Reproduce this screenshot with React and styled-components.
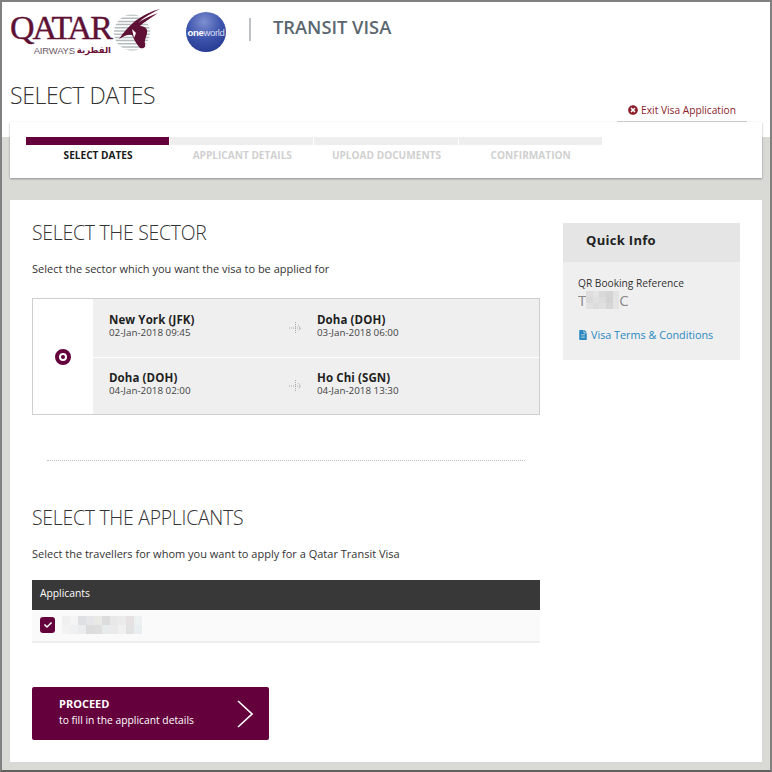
import React from 'react';
import styled, { createGlobalStyle } from 'styled-components';
import { FaTimesCircle, FaFileAlt, FaCheck } from 'react-icons/fa';

const maroon = '#64003c';

const GlobalStyle = createGlobalStyle`
  html, body {
    margin: 0;
    padding: 0;
  }
  body {
    font-family: "Open Sans", "Liberation Sans", sans-serif;
    color: #333;
  }
  * {
    box-sizing: border-box;
  }
`;

const Page = styled.div`
  width: 772px;
  height: 772px;
  overflow: hidden;
  padding: 0 8px 0 8px;
  border-top: 2px solid #808080;
  border-left: 2px solid #808080;
  border-right: 2px solid #808080;
  border-bottom: 2px solid #606060;
  background: linear-gradient(#fff 135px, #d9dad6 135px);
`;

const Header = styled.header`
  height: 71px;
  display: flex;
  align-items: flex-start;
`;

const Logo = styled.div`
  width: 153px;
  height: 50px;
  display: flex;
  align-items: flex-start;
  margin-top: 6px;
`;

const LogoText = styled.div`
  width: 101px;
  display: flex;
  flex-direction: column;
  align-items: flex-end;
  flex-shrink: 0;
`;

const LogoName = styled.div`
  font-family: "Liberation Serif", serif;
  font-size: 34px;
  line-height: 34px;
  margin-top: 3px;
  letter-spacing: -1.9px;
  -webkit-text-stroke: 0.4px #5e1134;
  color: #5e1134;
`;

const LogoSub = styled.div`
  display: flex;
  align-items: center;
  gap: 2px;
  margin-top: -1px;
  height: 12px;
`;

const LogoAirways = styled.span`
  font-family: "Liberation Sans", sans-serif;
  font-size: 9.5px;
  letter-spacing: -0.2px;
  color: #6d5a66;
`;

const LogoArabic = styled.span`
  font-family: "DejaVu Sans", sans-serif;
  font-size: 8.5px;
  font-weight: bold;
  color: #6d1238;
`;

const Oneworld = styled.div`
  width: 40px;
  height: 40px;
  border-radius: 50%;
  margin: 10px 0 0 23px;
  flex-shrink: 0;
  display: flex;
  align-items: center;
  justify-content: center;
  background: radial-gradient(circle at 45% 25%, #7e8fd0 0%, #3e55ad 45%, #1c2f86 100%);
  font-family: "Liberation Sans", sans-serif;
  font-size: 9.5px;
  color: #d7dcf0;
  letter-spacing: -0.3px;

  b {
    color: #fff;
  }
`;

const HeaderRule = styled.div`
  width: 2px;
  height: 23px;
  background: #bcc2c6;
  margin: 16px 22px 0 23px;
`;

const VisaTitle = styled.div`
  font-size: 18.3px;
  font-weight: 600;
  line-height: 24px;
  margin-top: 13px;
  color: #5b6770;
`;

const TitleRow = styled.div`
  height: 49px;
  display: flex;
  justify-content: space-between;
  align-items: flex-end;
`;

const PageTitle = styled.h1`
  margin: 0 0 12px;
  font-size: 23px;
  line-height: 30px;
  font-weight: 300;
  letter-spacing: -0.35px;
  color: #333;
`;

const ExitLink = styled.a`
  width: 130px;
  height: 24px;
  margin-right: 15px;
  display: flex;
  align-items: center;
  justify-content: center;
  gap: 3px;
  font-size: 10.2px;
  color: #8c1d2b;
  background: #fff;
  border-bottom: 1px solid #c9c9c9;
`;

const StepsCard = styled.div`
  height: 56px;
  padding: 15px 16px 0;
  background: #fff;
  display: grid;
  grid-template-columns: repeat(4, 144.2px);
  box-shadow: 0 1px 2px rgba(0, 0, 0, 0.35);
`;

const Step = styled.div`
  font-size: 10.1px;
  font-weight: 700;
  text-align: center;
  color: ${(p) => (p.$active ? '#1a1a1a' : '#d0d0d0')};

  &::before {
    content: '';
    display: block;
    height: 8px;
    margin-right: 1px;
    margin-bottom: 3px;
    background: ${(p) => (p.$active ? maroon : '#eeeeee')};
  }
`;

const MainCard = styled.main`
  margin-top: 22px;
  height: 562px;
  padding: 21px 22px 0;
  background: #fff;
  display: grid;
  grid-template-columns: 508px 177px;
  column-gap: 23px;
  align-items: start;
`;

const Heading = styled.h2`
  margin: 1px 0 0;
  font-size: 19.4px;
  line-height: 22px;
  font-weight: 300;
  letter-spacing: -0.25px;
  color: #333;
`;

const Lead = styled.p`
  margin: 16px 0 0;
  font-size: 11px;
  line-height: 18px;
  color: #333;
`;

const SectorBox = styled.div`
  margin-top: 20px;
  height: 117px;
  border: 1px solid #cfcfcf;
  display: flex;
`;

const RadioCell = styled.div`
  width: 60px;
  display: flex;
  align-items: center;
  justify-content: center;
  flex-shrink: 0;
`;

const Radio = styled.span`
  width: 16px;
  height: 16px;
  border-radius: 50%;
  border: 4px solid ${maroon};
  background: #fff;
  display: flex;
  align-items: center;
  justify-content: center;

  &::after {
    content: '';
    width: 4px;
    height: 4px;
    border-radius: 50%;
    background: ${maroon};
  }
`;

const Legs = styled.div`
  flex: 1;
  display: grid;
  grid-template-rows: 1fr 1fr;
  background: #efefef;
`;

const Leg = styled.div`
  display: grid;
  grid-template-columns: 179px 29px 1fr;
  align-items: center;
  padding-left: 16px;

  & + & {
    border-top: 1px solid #fff;
  }
`;

const Place = styled.div`
  padding-bottom: 4px;
`;

const PlaceName = styled.div`
  font-size: 11.5px;
  line-height: 15px;
  font-weight: 700;
  letter-spacing: 0.1px;
  color: #1f1f1f;
`;

const PlaceDate = styled.div`
  font-size: 9.8px;
  line-height: 12px;
  color: #444;
`;

const LegArrow = styled.svg`
  width: 14px;
  height: 14px;
  color: #a9a9a9;
`;

const Separator = styled.div`
  margin: 45px 15px 0;
  border-top: 1px dotted #bdbdbd;
`;

const ApplicantsHeading = styled(Heading)`
  margin-top: 46px;
`;

const Table = styled.div`
  margin-top: 17px;
`;

const TableHead = styled.div`
  height: 30px;
  display: flex;
  align-items: center;
  padding: 0 0 4px 8px;
  font-size: 10.3px;
  color: #fff;
  background: #383838;
`;

const TableRow = styled.div`
  height: 33px;
  display: flex;
  align-items: center;
  gap: 7px;
  padding: 0 8px 2px;
  background: #fafafa;
  border-bottom: 2px solid #eeeeee;
`;

const Checkbox = styled.span`
  width: 15px;
  height: 16px;
  border-radius: 3px;
  background: ${maroon};
  color: #fff;
  display: flex;
  align-items: center;
  justify-content: center;
  font-size: 8px;
`;

const Mosaic = styled.div`
  display: grid;
  grid-template-columns: repeat(${(p) => p.$cols}, ${(p) => p.$size}px);
  grid-auto-rows: ${(p) => p.$rowHeight}px;
`;

const Pixel = styled.span`
  background: ${(p) => p.$color};
`;

const ProceedButton = styled.a`
  margin-top: 44px;
  width: 237px;
  height: 53px;
  padding: 0 16px 4px 27px;
  border-radius: 2px;
  display: flex;
  align-items: center;
  justify-content: space-between;
  color: #fff;
  background: ${maroon};
`;

const ProceedText = styled.div`
  font-size: 10.3px;
  line-height: 16px;

  strong {
    display: block;
    font-size: 11px;
    font-weight: 700;
  }
`;

const ProceedChevron = styled.svg`
  margin-top: 4px;
`;

const QuickInfo = styled.aside`
  background: #efefef;
  margin-top: 2px;
`;

const QuickHead = styled.div`
  height: 39px;
  padding: 0 0 6px 23px;
  display: flex;
  align-items: center;
  font-size: 13px;
  font-weight: 700;
  letter-spacing: 0.3px;
  color: #222;
  background: #e5e5e5;
`;

const QuickBody = styled.div`
  height: 98px;
  padding: 14px 15px 0;
`;

const QuickLabel = styled.div`
  font-size: 10.2px;
  line-height: 15px;
  color: #333;
`;

const QuickValue = styled.div`
  display: flex;
  align-items: center;
  height: 17px;
  font-size: 15px;
  color: #8a8a8a;
`;

const QuickLink = styled.a`
  margin-top: 19px;
  display: flex;
  align-items: center;
  gap: 3px;
  font-size: 10.8px;
  line-height: 16px;
  color: #2a88c0;
`;

const nameBlur = [
  '#f0f0f0', '#f4f4f4', '#dfe0e4', '#e6e6ea', '#e9eae6', '#dcdcdc', '#e8e8e8', '#ecebeb', '#e7e1e3', '#eef1f1',
  '#f3f3f3', '#eef0f2', '#eaecee', '#dcdcdc', '#dedede', '#e8ebec', '#eaeaea', '#f0f0f0', '#e2e2e2', '#e9eef0',
];

const refBlur = [
  '#dedede', '#e4e4e4', '#d8d8d8', '#d4d4d4', '#e2e2e2',
  '#dadada', '#e0e0e0', '#dcdcdc', '#d2d2d2', '#e3e3e3',
  '#e1e1e1', '#dcdcdc', '#e0e0e0', '#d6d6d6', '#e4e4e4',
];

const legs = [
  [
    { name: 'New York (JFK)', date: '02-Jan-2018 09:45' },
    { name: 'Doha (DOH)', date: '03-Jan-2018 06:00' },
  ],
  [
    { name: 'Doha (DOH)', date: '04-Jan-2018 02:00' },
    { name: 'Ho Chi (SGN)', date: '04-Jan-2018 13:30' },
  ],
];

const steps = ['SELECT DATES', 'APPLICANT DETAILS', 'UPLOAD DOCUMENTS', 'CONFIRMATION'];

const Oryx = () => (
  <svg width="50" height="44" viewBox="0 0 50 44">
    <defs>
      <clipPath id="disc">
        <circle cx="21" cy="24.5" r="18" />
      </clipPath>
    </defs>
    <g clipPath="url(#disc)" stroke="#b4bbbd" strokeWidth="1.5">
      {Array.from({ length: 12 }, (_, i) => (
        <line key={i} x1="0" x2="42" y1={7 + i * 3.2} y2={7 + i * 3.2} />
      ))}
    </g>
    <path
      d="M49 1 C40 3 31 8 23 14 C17 19 12 25 8 31 C14 27 18 26 21 27 C23 31 25 36 29 40 C33 41 35 39 34 36 C33 31 37 27 36 22 C35 19 32 18 29 18 C33 14 40 10 47 5 C39 8 32 11 27 15 C33 9 41 5 49 1 Z"
      fill="#5e1134"
    />
    <path d="M21 21 L25 25 L23 30 Z" fill="#fff" />
  </svg>
);

const ArrowIcon = () => (
  <LegArrow viewBox="0 0 14 14" fill="none" stroke="currentColor" strokeWidth="1" strokeDasharray="1 1">
    <path d="M1 7 H13" />
    <path d="M7.5 1 V13" />
    <path d="M10 4 L13 7 L10 10" />
  </LegArrow>
);

const App = () => (
  <Page>
    <GlobalStyle />
    <Header>
      <Logo>
        <LogoText>
          <LogoName>QATAR</LogoName>
          <LogoSub>
            <LogoAirways>AIRWAYS</LogoAirways>
            <LogoArabic>القطرية</LogoArabic>
          </LogoSub>
        </LogoText>
        <Oryx />
      </Logo>
      <Oneworld>
        <span>
          <b>one</b>world
        </span>
      </Oneworld>
      <HeaderRule />
      <VisaTitle>TRANSIT VISA</VisaTitle>
    </Header>

    <TitleRow>
      <PageTitle>SELECT DATES</PageTitle>
      <ExitLink>
        <FaTimesCircle size={10} />
        Exit Visa Application
      </ExitLink>
    </TitleRow>

    <StepsCard>
      {steps.map((step, i) => (
        <Step key={step} $active={i === 0}>
          {step}
        </Step>
      ))}
    </StepsCard>

    <MainCard>
      <section>
        <Heading>SELECT THE SECTOR</Heading>
        <Lead>Select the sector which you want the visa to be applied for</Lead>
        <SectorBox>
          <RadioCell>
            <Radio />
          </RadioCell>
          <Legs>
            {legs.map((leg) => (
              <Leg key={leg[0].date}>
                <Place>
                  <PlaceName>{leg[0].name}</PlaceName>
                  <PlaceDate>{leg[0].date}</PlaceDate>
                </Place>
                <ArrowIcon />
                <Place>
                  <PlaceName>{leg[1].name}</PlaceName>
                  <PlaceDate>{leg[1].date}</PlaceDate>
                </Place>
              </Leg>
            ))}
          </Legs>
        </SectorBox>
        <Separator />
        <ApplicantsHeading>SELECT THE APPLICANTS</ApplicantsHeading>
        <Lead>Select the travellers for whom you want to apply for a Qatar Transit Visa</Lead>
        <Table>
          <TableHead>Applicants</TableHead>
          <TableRow>
            <Checkbox>
              <FaCheck />
            </Checkbox>
            <Mosaic $cols={10} $size={8} $rowHeight={9}>
              {nameBlur.map((color, i) => (
                <Pixel key={i} $color={color} />
              ))}
            </Mosaic>
          </TableRow>
        </Table>
        <ProceedButton>
          <ProceedText>
            <strong>PROCEED</strong>
            to fill in the applicant details
          </ProceedText>
          <ProceedChevron width="16" height="28" viewBox="0 0 16 28" fill="none" stroke="#fff" strokeWidth="1.6">
            <path d="M1 1 L15 14 L1 27" />
          </ProceedChevron>
        </ProceedButton>
      </section>

      <QuickInfo>
        <QuickHead>Quick Info</QuickHead>
        <QuickBody>
          <QuickLabel>QR Booking Reference</QuickLabel>
          <QuickValue>
            T
            <Mosaic $cols={5} $size={6.6} $rowHeight={6}>
              {refBlur.map((color, i) => (
                <Pixel key={i} $color={color} />
              ))}
            </Mosaic>
            C
          </QuickValue>
          <QuickLink>
            <FaFileAlt size={10} />
            Visa Terms &amp; Conditions
          </QuickLink>
        </QuickBody>
      </QuickInfo>
    </MainCard>
  </Page>
);

export default App;
